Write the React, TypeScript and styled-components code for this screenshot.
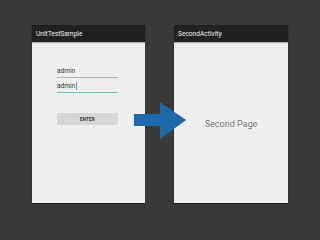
import React from "react";
import styled, { createGlobalStyle } from "styled-components";

const Global = createGlobalStyle`
  html, body { margin: 0; padding: 0; background: #3a3a3a; }
  body { width: 320px; height: 240px; overflow: hidden; font-family: Roboto, "Liberation Sans", sans-serif; }
`;

const Stage = styled.div`
  position: relative;
  width: 320px;
  height: 240px;
  background: #3a3a3a;
  display: flex;
  align-items: flex-start;
  padding: 25px 0 0 32px;
  box-sizing: border-box;
  gap: 29px;
`;

const Phone = styled.div<{ $w: number }>`
  width: ${(p) => p.$w}px;
  height: 178px;
  background: #eeeeee;
  display: flex;
  flex-direction: column;
  box-shadow: 0 1px 1px rgba(0, 0, 0, 0.5);
`;

const TitleBar = styled.div`
  height: 17px;
  background: #212121;
  color: #f0f0f0;
  font-size: 6.6px;
  font-weight: 400;
  display: flex;
  align-items: center;
  padding-left: 4px;
  box-shadow: 0 1px 1px rgba(0, 0, 0, 0.25);
`;

const Form = styled.div`
  display: flex;
  flex-direction: column;
  padding: 23px 27px 0 25px;
`;

const Field = styled.div<{ $focused?: boolean }>`
  height: 12px;
  margin-bottom: 2px;
  border-bottom: 1px solid ${(p) => (p.$focused ? "#6fc2b8" : "#b0b0b0")};
  font-size: 6.5px;
  color: #333;
  display: flex;
  align-items: center;
`;

const Cursor = styled.span`
  display: inline-block;
  width: 1px;
  height: 8px;
  background: #4db6ac;
  margin-left: 0.5px;
`;

const Button = styled.div`
  margin-top: 18px;
  height: 12px;
  background: #d6d6d6;
  font-size: 4.5px;
  font-weight: 700;
  color: #333;
  display: flex;
  align-items: center;
  justify-content: center;
  letter-spacing: 0.2px;
`;

const Center = styled.div`
  flex: 1;
  display: flex;
  align-items: center;
  justify-content: center;
  padding-top: 3px;
  font-size: 9px;
  color: #7a7a7a;
`;

const Arrow = styled.svg`
  position: absolute;
  left: 134px;
  top: 102px;
`;

export default function App() {
  return (
    <>
      <Global />
      <Stage>
        <Phone $w={113}>
          <TitleBar>UnitTestSample</TitleBar>
          <Form>
            <Field>admin</Field>
            <Field $focused>
              admin
              <Cursor />
            </Field>
            <Button>ENTER</Button>
          </Form>
        </Phone>
        <Phone $w={114}>
          <TitleBar>SecondActivity</TitleBar>
          <Center>Second Page</Center>
        </Phone>
        <Arrow width="53" height="38" viewBox="0 0 53 38">
          <polygon points="0,12 26,12 26,0 52,18 26,37 26,24 0,24" fill="#1f68ac" />
        </Arrow>
      </Stage>
    </>
  );
}
